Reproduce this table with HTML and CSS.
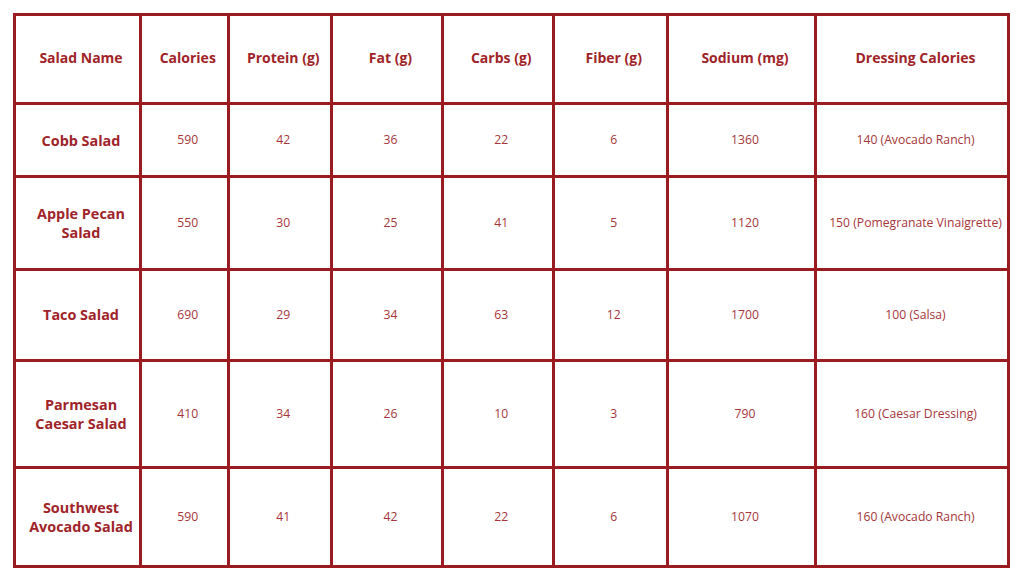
FILE: index.html
```html
<!DOCTYPE html>
<html lang="en">
<head>
<meta charset="utf-8">
<title>Salad Nutrition</title>
<link rel="stylesheet" href="styles.css">
</head>
<body>
<table class="nutrition">
  <colgroup>
    <col class="c-name">
    <col class="c-cal">
    <col class="c-pro">
    <col class="c-fat">
    <col class="c-carb">
    <col class="c-fib">
    <col class="c-sod">
    <col class="c-dress">
  </colgroup>
  <thead>
    <tr class="r-head">
      <th>Salad Name</th>
      <th>Calories</th>
      <th>Protein (g)</th>
      <th>Fat (g)</th>
      <th>Carbs (g)</th>
      <th>Fiber (g)</th>
      <th>Sodium (mg)</th>
      <th>Dressing Calories</th>
    </tr>
  </thead>
  <tbody>
    <tr class="r1">
      <th>Cobb Salad</th>
      <td>590</td><td>42</td><td>36</td><td>22</td><td>6</td><td>1360</td><td>140 (Avocado Ranch)</td>
    </tr>
    <tr class="r2">
      <th>Apple Pecan Salad</th>
      <td>550</td><td>30</td><td>25</td><td>41</td><td>5</td><td>1120</td><td>150 (Pomegranate Vinaigrette)</td>
    </tr>
    <tr class="r3">
      <th>Taco Salad</th>
      <td>690</td><td>29</td><td>34</td><td>63</td><td>12</td><td>1700</td><td>100 (Salsa)</td>
    </tr>
    <tr class="r4">
      <th>Parmesan Caesar Salad</th>
      <td>410</td><td>34</td><td>26</td><td>10</td><td>3</td><td>790</td><td>160 (Caesar Dressing)</td>
    </tr>
    <tr class="r5">
      <th>Southwest Avocado Salad</th>
      <td>590</td><td>41</td><td>42</td><td>22</td><td>6</td><td>1070</td><td>160 (Avocado Ranch)</td>
    </tr>
  </tbody>
</table>
</body>
</html>
```

FILE: styles.css
```css
html, body {
  margin: 0;
  padding: 0;
  background: #ffffff;
}

body {
  padding: 13px 0 0 13px;
  font-family: "Open Sans", "Liberation Sans", sans-serif;
  color: #a3282d;
}

.nutrition {
  border-collapse: collapse;
  table-layout: fixed;
  width: 997px;
}

.c-name  { width: 126px; }
.c-cal   { width: 87.5px; }
.c-pro   { width: 103.5px; }
.c-fat   { width: 111px; }
.c-carb  { width: 110.5px; }
.c-fib   { width: 114.5px; }
.c-sod   { width: 148px; }
.c-dress { width: 193px; }

.nutrition th,
.nutrition td {
  border: 3px solid #9a1c20;
  text-align: center;
  vertical-align: middle;
  padding: 0 6px 0 13px;
}

.nutrition th {
  font-weight: 700;
  font-size: 14px;
  line-height: 19px;
  color: #9f2429;
}

.nutrition tbody th {
  font-size: 14.4px;
}

.nutrition thead th {
  padding-bottom: 3px;
}

.nutrition td {
  font-weight: 400;
  font-size: 12.2px;
  line-height: 16px;
  color: #a6353a;
  padding: 0 1px 0 8px;
}

.r-head { height: 89px; }
.r1 { height: 73px; }
.r2 { height: 92.5px; }
.r3 { height: 91px; }
.r4 { height: 107.5px; }
.r5 { height: 99px; }
```
